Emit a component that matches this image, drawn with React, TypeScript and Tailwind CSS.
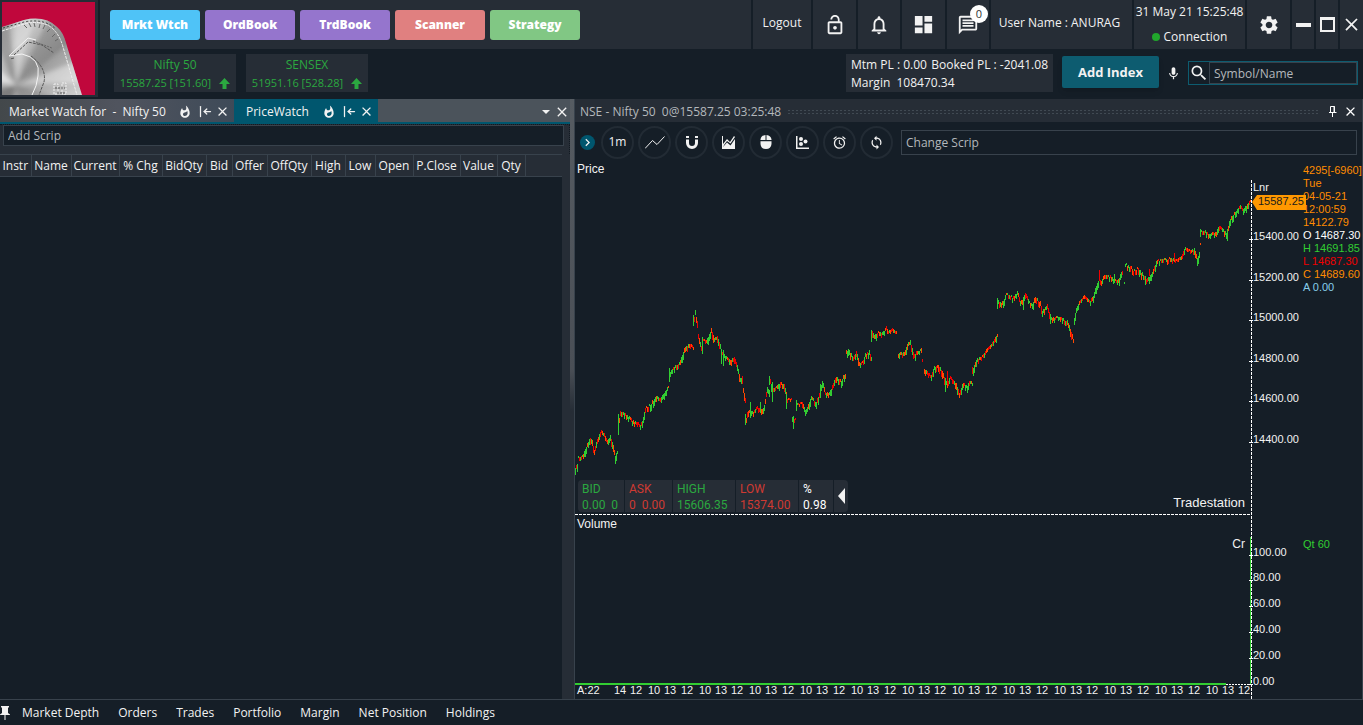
import type { ReactNode } from 'react';
import {
    MdAlarm,
    MdChevronRight,
    MdClose,
    MdDashboard,
    MdLockOpen,
    MdMic,
    MdNotificationsNone,
    MdOutlineMessage,
    MdSearch,
    MdSettings,
    MdSync,
    MdWhatshot,
} from 'react-icons/md';
import { TbArrowBarToLeft } from 'react-icons/tb';

const menuButtons = [
    { label: 'Mrkt Wtch', color: 'bg-[#4fc3f7]' },
    { label: 'OrdBook', color: 'bg-[#9575cd]' },
    { label: 'TrdBook', color: 'bg-[#9575cd]' },
    { label: 'Scanner', color: 'bg-[#e08080]' },
    { label: 'Strategy', color: 'bg-[#81c784]' },
];

const indices = [
    { name: 'Nifty 50', value: '15587.25 [151.60]' },
    { name: 'SENSEX', value: '51951.16 [528.28]' },
];

const columns = [
    { label: 'Instr', width: 'w-[31px]' },
    { label: 'Name', width: 'w-[40px]' },
    { label: 'Current', width: 'w-[48px]' },
    { label: '% Chg', width: 'w-[43px]' },
    { label: 'BidQty', width: 'w-[44px]' },
    { label: 'Bid', width: 'w-[26px]' },
    { label: 'Offer', width: 'w-[35px]' },
    { label: 'OffQty', width: 'w-[44px]' },
    { label: 'High', width: 'w-[34px]' },
    { label: 'Low', width: 'w-[30px]' },
    { label: 'Open', width: 'w-[38px]' },
    { label: 'P.Close', width: 'w-[47px]' },
    { label: 'Value', width: 'w-[37px]' },
    { label: 'Qty', width: 'w-[28px]' },
];

const bottomTabs = ['Market Depth', 'Orders', 'Trades', 'Portfolio', 'Margin', 'Net Position', 'Holdings'];

const quotes = [
    { label: 'BID', value: '0.00  0', style: 'w-[46px] text-[#2ba840]' },
    { label: 'ASK', value: '0  0.00', style: 'w-[47px] text-[#cf3a32]' },
    { label: 'HIGH', value: '15606.35', style: 'w-[62px] text-[#2ba840]' },
    { label: 'LOW', value: '15374.00', style: 'w-[62px] text-[#cf3a32]' },
    { label: '%', value: '0.98', style: 'w-[34px] text-white' },
];

const legend = [
    { text: '4295[-6960]', color: 'text-[#ff8c00]' },
    { text: 'Tue', color: 'text-[#ff8c00]' },
    { text: '04-05-21', color: 'text-[#ff8c00]' },
    { text: '12:00:59', color: 'text-[#ff8c00]' },
    { text: '14122.79', color: 'text-[#ff8c00]' },
    { text: 'O 14687.30', color: 'text-white' },
    { text: 'H 14691.85', color: 'text-[#32cd32]' },
    { text: 'L 14687.30', color: 'text-[#f00000]' },
    { text: 'C 14689.60', color: 'text-[#ff8c00]' },
    { text: 'A 0.00', color: 'text-[#87ceeb]' },
];

const priceAxis = [
    { label: '15400.00', y: 236 },
    { label: '15200.00', y: 277 },
    { label: '15000.00', y: 317 },
    { label: '14800.00', y: 358 },
    { label: '14600.00', y: 398 },
    { label: '14400.00', y: 439 },
];

const volumeAxis = [
    { label: '100.00', y: 552 },
    { label: '80.00', y: 577 },
    { label: '60.00', y: 603 },
    { label: '40.00', y: 629 },
    { label: '20.00', y: 655 },
    { label: '0.00', y: 681 },
];

// one entry per run of sessions, a new entry starts after an opening gap
const runs = [
    '575,470 577,466 578,458 583,457 586,448 590,439 592,443 594,453 596,445 601,432 604,436 607,443 610,438 613,447 615,458 617,452',
    '618,430 620,412 625,415 632,421 637,423 640,427 643,420 645,408 650,406 656,397 660,401 665,392 668,388',
    '669,374 673,369 680,363 685,348 690,345 693,348',
    '694,320 695,313 697,326 698,337 701,349 703,341 707,341 711,331 714,340 717,338 719,344 722,354 726,358 730,361 734,359 737,368 740,380 742,378 743,391 745,398',
    '746,421 747,413 750,411 754,412 757,408 760,411 764,408 767,389 769,392 770,382 772,389 777,388 780,383 784,386 787,400 791,400',
    '792,420 793,424 795,420',
    '796,405 802,404 805,411 808,407 811,398 816,404 820,393 822,383 825,393 830,393 836,378 841,382 845,374',
    '846,353 848,350 853,360 856,354 859,363 863,363 865,355 869,353 871,358',
    '872,333 874,338 877,333 883,333 886,329 888,333 892,330 895,333 896,332',
    '898,357 900,353 905,353 907,345 910,343 914,357 917,352 921,351 922,360',
    '924,370 928,374 931,378 934,368 938,366 942,373 945,382 948,384 950,378 956,385 959,396 963,384 967,388 969,382 972,384',
    '973,370 977,359 983,357 987,350 992,345 995,340 997,335',
    '998,302 1002,304 1006,295 1013,298 1017,294 1020,301 1023,300 1025,295 1029,303 1033,304 1035,298 1040,304 1042,312 1047,307 1050,318 1055,318 1060,318 1067,323 1069,328 1071,334 1073,340',
    '1074,320 1076,310 1080,302 1084,297 1090,303 1093,298 1096,288 1099,280 1102,281 1105,276 1110,277 1114,281 1119,280 1122,272',
    '1125,265 1130,267 1133,271 1138,269 1142,275 1145,281 1149,278 1153,272 1157,261 1163,260 1172,259 1177,261 1182,257 1185,249 1189,251 1194,250 1197,260 1199,255 1200,245',
    '1201,232 1205,232 1209,236 1213,233 1217,232 1219,227 1223,231 1227,235 1229,222 1234,214 1240,207 1243,211 1247,205 1250,202',
];

// tall wicks that stand out of the run: x, top, bottom, colour
const wicks: [number, number, number, string][] = [
    [575, 468, 475, '#32cd32'],
    [618, 414, 435, '#32cd32'],
    [669, 368, 382, '#32cd32'],
    [693, 315, 326, '#32cd32'],
    [697, 321, 328, '#f00000'],
    [702, 337, 354, '#32cd32'],
    [721, 350, 364, '#32cd32'],
    [723, 350, 366, '#32cd32'],
    [745, 414, 425, '#32cd32'],
    [750, 402, 418, '#32cd32'],
    [760, 402, 413, '#32cd32'],
    [769, 376, 385, '#32cd32'],
    [772, 382, 402, '#32cd32'],
    [786, 394, 409, '#32cd32'],
    [793, 416, 429, '#32cd32'],
    [796, 400, 411, '#32cd32'],
    [820, 384, 396, '#32cd32'],
    [871, 330, 342, '#32cd32'],
    [945, 378, 392, '#32cd32'],
    [947, 371, 384, '#f00000'],
    [972, 367, 374, '#f00000'],
    [997, 298, 309, '#32cd32'],
    [1023, 298, 310, '#32cd32'],
    [1050, 314, 324, '#32cd32'],
    [1099, 270, 281, '#f00000'],
    [1114, 274, 283, '#32cd32'],
    [1124, 282, 284, '#32cd32'],
    [1145, 276, 285, '#32cd32'],
    [1149, 269, 276, '#f00000'],
    [1174, 253, 260, '#f00000'],
    [1200, 229, 237, '#32cd32'],
    [1227, 229, 241, '#32cd32'],
];

type Bar = { x: number; y: number; h: number; color: string };

function buildBars(run: string): Bar[] {
    const pts = run.split(' ').map((p) => p.split(',').map(Number));
    const bars: Bar[] = [];
    for (let i = 0; i < pts.length; i++) {
        const [x0, y0] = pts[i];
        const [x1, y1] = pts[i + 1] ?? [x0 + 1, y0];
        const step = (y1 - y0) / (x1 - x0);
        for (let x = x0; x < x1; x++) {
            const seed = (x * x * 31 + x * 17) % 97;
            const mid = Math.round(y0 + step * (x - x0)) + (seed % 4) - 1;
            const h = 2 + (seed % 4) + Math.min(3, Math.round(Math.abs(step)));
            const up = step < -1 ? seed % 4 !== 0 : seed % 5 < 2;
            bars.push({ x, y: mid - Math.floor(h / 2), h, color: up ? '#32cd32' : seed % 3 === 0 ? '#ff4a00' : '#f00000' });
        }
    }
    return bars;
}

const bars = runs.flatMap(buildBars);

const timeLabels = Array.from({ length: 12 }, (_, i) => Math.round(636 + i * 50.7)).flatMap((x) => [
    { x, label: '12' },
    { x: x + 18, label: '10' },
    { x: x + 34, label: '13' },
]);

function PriceChart() {
    return (
        <svg
            viewBox="575 160 727 539"
            className="relative z-10 block h-full w-full overflow-visible font-['Liberation_Sans',sans-serif] text-xs"
            fill="#f2f2f2"
            role="img"
            aria-label="Nifty 50 price and volume"
        >
            <text x="577" y="173">Price</text>
            <g shapeRendering="crispEdges">
                {bars.map((b) => (
                    <rect key={b.x} x={b.x} y={b.y} width="1" height={b.h} fill={b.color} />
                ))}
                {wicks.map(([x, top, bottom, color]) => (
                    <rect key={x} x={x} y={top} width="1" height={bottom - top} fill={color} />
                ))}
                <path d="M575 514.5H1251" stroke="#fff" strokeDasharray="3 1" />
                <path d="M1251.5 180V699" stroke="#fff" strokeDasharray="3 1" />
                <path d="M575 684H1226" stroke="#32cd32" strokeWidth="2" />
                <path d="M1226 684.5H1251" stroke="#fff" strokeDasharray="2 1" />
                <path d="M1250.5 537V685" stroke="#32cd32" />
            </g>

            <g className="text-[11px]">
                <text x="1253" y="191">Lnr</text>
                {[...priceAxis, ...volumeAxis].map((tick) => (
                    <g key={tick.label}>
                        <path d={`M1249 ${tick.y + 3}.5h4`} stroke="#fff" shapeRendering="crispEdges" />
                        <text x="1253" y={tick.y + 4}>{tick.label}</text>
                    </g>
                ))}
                <path d="M1252 202l5-7h49v15h-49z" fill="#ff9800" />
                <text x="1258" y="205" fill="#1b1b1b">15587.25</text>
            </g>

            <text x="1245" y="507" textAnchor="end" className="text-[13px]">Tradestation</text>
            <text x="577" y="528">Volume</text>
            <text x="1245" y="548" textAnchor="end">Cr</text>
            <g className="text-[11px]">
                <text x="577" y="694">A:22</text>
                <text x="620" y="694" textAnchor="middle">14</text>
                {timeLabels.map((t) => (
                    <text key={t.x} x={t.x} y="694" textAnchor="middle">{t.label}</text>
                ))}
                <text x="1244" y="694" textAnchor="middle">12</text>
            </g>
        </svg>
    );
}

function Logo() {
    return (
        <svg viewBox="0 0 93 93" className="block h-[93px] w-[93px]" role="img" aria-label="Logo">
            <defs>
                <linearGradient id="metal" x1="0" y1="0" x2="1" y2="1">
                    <stop offset="0" stopColor="#a5a5a5" />
                    <stop offset="0.3" stopColor="#c4c4c4" />
                    <stop offset="0.55" stopColor="#9b9b9b" />
                    <stop offset="0.8" stopColor="#c0c0c0" />
                    <stop offset="1" stopColor="#dcdcdc" />
                </linearGradient>
                <filter id="soften"><feGaussianBlur stdDeviation="2" /></filter>
                <clipPath id="plate">
                    <path d="M0 25L22 18Q43 13 55 25Q61 30 64 41L80 93H0z" />
                </clipPath>
            </defs>
            <rect width="93" height="93" fill="#c0073c" />
            <g clipPath="url(#plate)">
                <rect width="93" height="93" fill="url(#metal)" />
                <g filter="url(#soften)">
                    <path d="M14 83L-10 35L6 15z" fill="#777" opacity="0.5" />
                    <path d="M14 83L12 10L34 10z" fill="#f0f0f0" opacity="0.4" />
                    <path d="M14 83L50 10L75 35z" fill="#6f6f6f" opacity="0.4" />
                    <path d="M14 83L85 55L90 80z" fill="#fff" opacity="0.4" />
                    <path d="M14 83L70 100L20 110z" fill="#777" opacity="0.4" />
                    <path d="M14 83L-10 60L-10 80z" fill="#fff" opacity="0.6" />
                    <path d="M14 83L-10 90L5 110z" fill="#666" opacity="0.6" />
                </g>
            </g>
            <g fill="none" strokeWidth="1">
                <path d="M0 29L22 22Q42 17 52 28Q58 34 61 45L75 93" stroke="#eee" strokeDasharray="3 1" />
                <path d="M1 26L22 20Q42 16 54 27" stroke="#444" strokeDasharray="2 2" />
                <path d="M22 23l3 3M27 21l2 4M32 21l1 4M38 22l-1 4M43 23l-2 4M48 27l-3 3M53 32l-3 3M56 37l-3 2" stroke="#666" />
                <path d="M7 54L26 36L34 38M7 54L20 52Q39 56 36 74Q35 84 30 93" stroke="#f4f4f4" />
                <path d="M12 53L26 40L40 43L52 51M12 56L8 57M29 54Q45 66 42 80L37 93" stroke="#555" strokeDasharray="3 1" />
                <path d="M31 39L50 46" stroke="#666" strokeDasharray="2 1" />
                <path d="M52 82h4v10h-4zM60 81h4v11h-4z" stroke="#eee" strokeDasharray="2 1" />
                <path d="M53 86h10M55 91h8" stroke="#555" strokeDasharray="2 1" />
            </g>
        </svg>
    );
}

function TopCell({ className, children }: { className: string; children: ReactNode }) {
    return <div className={`flex shrink-0 items-center justify-center bg-[#262d36] ${className}`}>{children}</div>;
}

function Header() {
    return (
        <header className="flex shrink-0">
            <div className="mr-0.5 flex h-[97px] w-[98px] shrink-0 bg-[#262d36] pt-0.5 pl-0.5">
                <Logo />
            </div>
            <div className="min-w-0 flex-1">
                <div className="flex h-[49px] gap-0.5">
                    <nav className="flex flex-1 items-center gap-[5px] bg-[#262d36] pl-2.5">
                        {menuButtons.map((b) => (
                            <button
                                key={b.label}
                                type="button"
                                className={`h-[30px] w-[90px] rounded-[3px] text-xs font-extrabold text-white ${b.color}`}
                            >
                                {b.label}
                            </button>
                        ))}
                    </nav>
                    <TopCell className="w-[58px]">
                        <button type="button" className="pb-1">Logout</button>
                    </TopCell>
                    <TopCell className="w-[43px]">
                        <button type="button" aria-label="Lock"><MdLockOpen size={22} /></button>
                    </TopCell>
                    <TopCell className="w-[42px]">
                        <button type="button" aria-label="Alerts"><MdNotificationsNone size={22} /></button>
                    </TopCell>
                    <TopCell className="w-[43px]">
                        <button type="button" aria-label="Dashboard"><MdDashboard size={23} /></button>
                    </TopCell>
                    <TopCell className="relative w-[42px]">
                        <button type="button" aria-label="Messages"><MdOutlineMessage size={22} /></button>
                        <span className="absolute top-[5px] right-px flex h-[18px] w-[18px] items-center justify-center rounded-full bg-white text-[11px] text-[#333]">
                            0
                        </span>
                    </TopCell>
                    <TopCell className="w-[141px] pr-1 pb-1">User Name : ANURAG</TopCell>
                    <TopCell className="w-[111px] flex-col gap-[9px]">
                        <span className="leading-4">31 May 21 15:25:48</span>
                        <span className="flex items-center gap-1 leading-4">
                            <span className="h-2 w-2 rounded-full bg-[#21a62c]" />
                            Connection
                        </span>
                    </TopCell>
                    <TopCell className="w-[43px]">
                        <button type="button" aria-label="Settings"><MdSettings size={22} /></button>
                    </TopCell>
                    <TopCell className="w-[22px]">
                        <button type="button" aria-label="Minimize" className="h-1 w-[15px] bg-[#f2f2f2]" />
                    </TopCell>
                    <TopCell className="w-[22px]">
                        <button type="button" aria-label="Maximize" className="h-[15px] w-[15px] border-2 border-t-[3px] border-[#f2f2f2]" />
                    </TopCell>
                    <TopCell className="w-[23px]">
                        <button type="button" aria-label="Close"><MdClose size={21} /></button>
                    </TopCell>
                </div>

                <div className="flex h-[50px] items-start pt-[5px] pr-[5px] pl-3.5">
                    <div className="flex gap-2.5 text-[#2ba840]">
                        {indices.map((index) => (
                            <div key={index.name} className="h-[38px] w-[122px] bg-[#262d36] pt-0.5 text-center leading-[18px]">
                                <div>{index.name}</div>
                                <div className="flex items-center justify-center gap-2 text-[11px] leading-[18px] whitespace-nowrap">
                                    {index.value}
                                    <svg viewBox="0 0 11 11" className="h-[11px] w-[11px]" fill="currentColor" aria-hidden="true">
                                        <path d="M5.500 0L11 6H7.500V11H3.500V6H0z" />
                                    </svg>
                                </div>
                            </div>
                        ))}
                    </div>
                    <div className="ml-auto h-[38px] w-[207px] bg-[#262d36] px-[5px] pt-0.5 leading-[18px] whitespace-pre">
                        <div className="flex justify-between">
                            <span>Mtm PL : 0.00</span>
                            <span>Booked PL : -2041.08</span>
                        </div>
                        <div>Margin  108470.34</div>
                    </div>
                    <button
                        type="button"
                        className="mt-0.5 ml-[9px] h-8 w-[97px] rounded-xs bg-[#0d5c70] pt-0.5 text-[13px] font-bold shadow-md"
                    >
                        Add Index
                    </button>
                    <button type="button" aria-label="Voice search" className="mt-3 ml-[7px]"><MdMic size={15} /></button>
                    <div className="mt-[7px] ml-[7px] flex h-6 w-[170px] items-center border border-[#0d5c70]">
                        <MdSearch size={20} className="shrink-0" />
                        <input
                            type="text"
                            aria-label="Symbol/Name"
                            placeholder="Symbol/Name"
                            className="h-full min-w-0 flex-1 border border-[#38424c] px-1 outline-none placeholder:text-[#b4b8bc]"
                        />
                    </div>
                </div>
            </div>
        </header>
    );
}

function TabTools() {
    return (
        <span className="flex items-center">
            <MdWhatshot size={14} />
            <TbArrowBarToLeft size={15} className="ml-1.5" />
            <button type="button" aria-label="Close tab" className="ml-0.5"><MdClose size={15} /></button>
        </span>
    );
}

function MarketWatch() {
    return (
        <section className="flex w-[570px] shrink-0 flex-col bg-[#262d36]">
            <div className="flex h-[25px] shrink-0 border-b-2 border-[#00566e] bg-[#4b535b]">
                <div className="flex w-[234px] items-center justify-between bg-linear-to-r from-[#43484b] via-[#50545e] to-[#3e4a58] pt-0.5 pr-1 pl-[9px]">
                    <span className="whitespace-pre">Market Watch for  -  Nifty 50</span>
                    <TabTools />
                </div>
                <div className="flex w-[144px] items-center justify-between bg-[#00566e] pt-0.5 pr-1 pl-3">
                    <span>PriceWatch</span>
                    <TabTools />
                </div>
                <div className="flex flex-1 items-center justify-end gap-1 pt-0.5">
                    <button type="button" aria-label="Tab list">
                        <svg viewBox="0 0 8 4" className="h-1 w-2" fill="currentColor"><path d="M0 0h8L4 4z" /></svg>
                    </button>
                    <button type="button" aria-label="Close panel"><MdClose size={16} /></button>
                </div>
            </div>
            <div className="h-[30px] shrink-0 border-t border-r border-dotted border-[#121a22] pr-[5px] pl-[3px]">
                <input
                    type="text"
                    aria-label="Add Scrip"
                    placeholder="Add Scrip"
                    className="block h-[21px] w-full border border-[#38424c] bg-[#151e27] px-1 outline-none placeholder:text-[#b4b8bc]"
                />
            </div>
            <div className="mr-2 flex-1 bg-[#151e27]">
                <table className="w-full table-fixed border-collapse">
                    <thead>
                        <tr className="h-[22px] border-y border-[#38424c] bg-[#262d36]">
                            {columns.map((c) => (
                                <th key={c.label} className={`border-r border-[#38424c] p-0 text-center font-normal whitespace-nowrap ${c.width}`}>
                                    {c.label}
                                </th>
                            ))}
                            <td />
                        </tr>
                    </thead>
                </table>
            </div>
        </section>
    );
}

const tools: { label: string; icon: ReactNode }[] = [
    { label: 'Interval', icon: '1m' },
    {
        label: 'Line tool',
        icon: (
            <svg viewBox="0 0 20 13" className="h-[13px] w-5" fill="none" stroke="currentColor">
                <path d="M0 12.500L7.500 4.500L12 8.500L19.500 0.500" />
            </svg>
        ),
    },
    {
        label: 'Magnet',
        icon: (
            <svg viewBox="0 0 12 13" className="h-[13px] w-3" fill="none" stroke="currentColor" strokeWidth="3">
                <path d="M1.500 3.500V7a4.500 4.500 0 0 0 9 0V3.500M1.500 0v2M10.500 0v2" />
            </svg>
        ),
    },
    {
        label: 'Chart type',
        icon: (
            <svg viewBox="0 0 14 13" className="h-[13px] w-3.5" fill="currentColor">
                <path d="M0 0h1v13H0zM1 12L1 8L5 3L8 6L12 0L13 1L8.500 7.500L5 5L2 9z" />
                <path d="M1 13V11L5 6.500L8.500 9.500L13 3V13z" />
            </svg>
        ),
    },
    {
        label: 'Mouse',
        icon: (
            <svg viewBox="0 0 12 14" className="h-3.5 w-3" fill="currentColor">
                <path d="M5.500 0v5H0.500V4.500Q1 0.500 5.500 0zM6.500 0v5H11.500V4.500Q11 0.500 6.500 0zM0.500 6.200H11.500V9Q11 14 6 14T0.500 9z" />
            </svg>
        ),
    },
    {
        label: 'Scatter',
        icon: (
            <svg viewBox="0 0 13 13" className="h-[13px] w-[13px]" fill="currentColor">
                <path d="M0 0h1.500v11.500H13V13H0z" />
                <circle cx="5" cy="3" r="2" />
                <circle cx="5" cy="8" r="2" />
                <circle cx="9.500" cy="5.500" r="2" />
            </svg>
        ),
    },
    { label: 'Alarm', icon: <MdAlarm size={15} /> },
    { label: 'Refresh', icon: <MdSync size={15} /> },
];

function ChartPanel() {
    return (
        <section className="flex min-w-0 flex-1 flex-col border-x border-[#38424c]">
            <div className="flex h-[23px] shrink-0 items-center gap-1.5 bg-[#262d36] pt-0.5 pr-1 pl-[5px] text-[#b4b8bc]">
                <span className="whitespace-pre">NSE - Nifty 50  0@15587.25 03:25:48</span>
                <span className="h-1.5 flex-1 bg-[radial-gradient(#414a53_1px,transparent_1px)] bg-size-[4px_3px]" />
                <button type="button" aria-label="Pin" className="ml-1 text-white">
                    <svg viewBox="0 0 8 11" className="h-[11px] w-2" fill="none" stroke="currentColor">
                        <path d="M1.500 6V0.500H5.500V6M5 0V6M0 6.500H7.500M3.500 7V11" />
                    </svg>
                </button>
                <button type="button" aria-label="Close chart" className="text-white"><MdClose size={15} /></button>
            </div>
            <div className="flex h-[38px] shrink-0 items-center pt-0.5 pr-[5px] pl-[5px]">
                <button type="button" aria-label="Expand" className="mr-1.5 flex h-[15px] w-[15px] items-center justify-center rounded-full bg-[#00566e]">
                    <MdChevronRight size={15} />
                </button>
                <div className="flex gap-1">
                    {tools.map((tool) => (
                        <button
                            key={tool.label}
                            type="button"
                            aria-label={tool.label}
                            className="flex h-[33px] w-[33px] items-center justify-center rounded-full border-2 border-[#222b34]"
                        >
                            {tool.icon}
                        </button>
                    ))}
                </div>
                <input
                    type="text"
                    aria-label="Change Scrip"
                    placeholder="Change Scrip"
                    className="ml-2 h-[25px] min-w-0 flex-1 border border-[#38424c] px-1 outline-none placeholder:text-[#b4b8bc]"
                />
            </div>
            <div className="flex min-h-0 flex-1">
                <div className="relative min-w-0 flex-1">
                    <PriceChart />
                    <div className="absolute top-[320px] left-[3px] z-20 flex h-8 gap-px overflow-hidden rounded-sm font-[Roboto,sans-serif]">
                        {quotes.map((q) => (
                            <div key={q.label} className={`bg-[#262d36] pt-px pl-1 leading-4 whitespace-pre ${q.style}`}>
                                <div>{q.label}</div>
                                <div>{q.value}</div>
                            </div>
                        ))}
                        <button type="button" aria-label="Collapse quote" className="flex w-[14px] items-center justify-center bg-[#262d36]">
                            <svg viewBox="0 0 7 16" className="h-4 w-[7px]" fill="currentColor"><path d="M7 0V16L0 8z" /></svg>
                        </button>
                    </div>
                </div>
                <div className="w-[60px] shrink-0 pt-1 pl-px font-['Liberation_Sans',sans-serif] text-[11px] leading-[13px] whitespace-nowrap">
                    {legend.map((l) => (
                        <div key={l.text} className={l.color}>{l.text}</div>
                    ))}
                    <div className="mt-[244px] text-[#32cd32]">Qt 60</div>
                </div>
            </div>
        </section>
    );
}

export default function App() {
    return (
        <div className="flex h-screen min-h-[600px] flex-col overflow-hidden bg-[#151e27] font-['Open_Sans',sans-serif] text-xs text-[#f2f2f2]">
            <Header />
            <main className="flex min-h-0 flex-1">
                <MarketWatch />
                <div className="w-1 shrink-0 bg-linear-to-b from-[#565c62] via-[#4a4f56] via-45% to-[#262d36] to-52%" />
                <ChartPanel />
            </main>
            <footer className="flex h-[26px] shrink-0 items-center border-t border-[#38424c]">
                <svg viewBox="0 0 10 14" className="h-3.5 w-2.5" fill="currentColor" aria-hidden="true">
                    <path d="M1 0h8v1.500H8V7l2 1.500V9H5.500v5h-1V9H0V8.500L2 7V1.500H1z" />
                </svg>
                <nav className="ml-3 flex gap-[19px] pt-px">
                    {bottomTabs.map((tab) => (
                        <button key={tab} type="button">{tab}</button>
                    ))}
                </nav>
            </footer>
        </div>
    );
}
